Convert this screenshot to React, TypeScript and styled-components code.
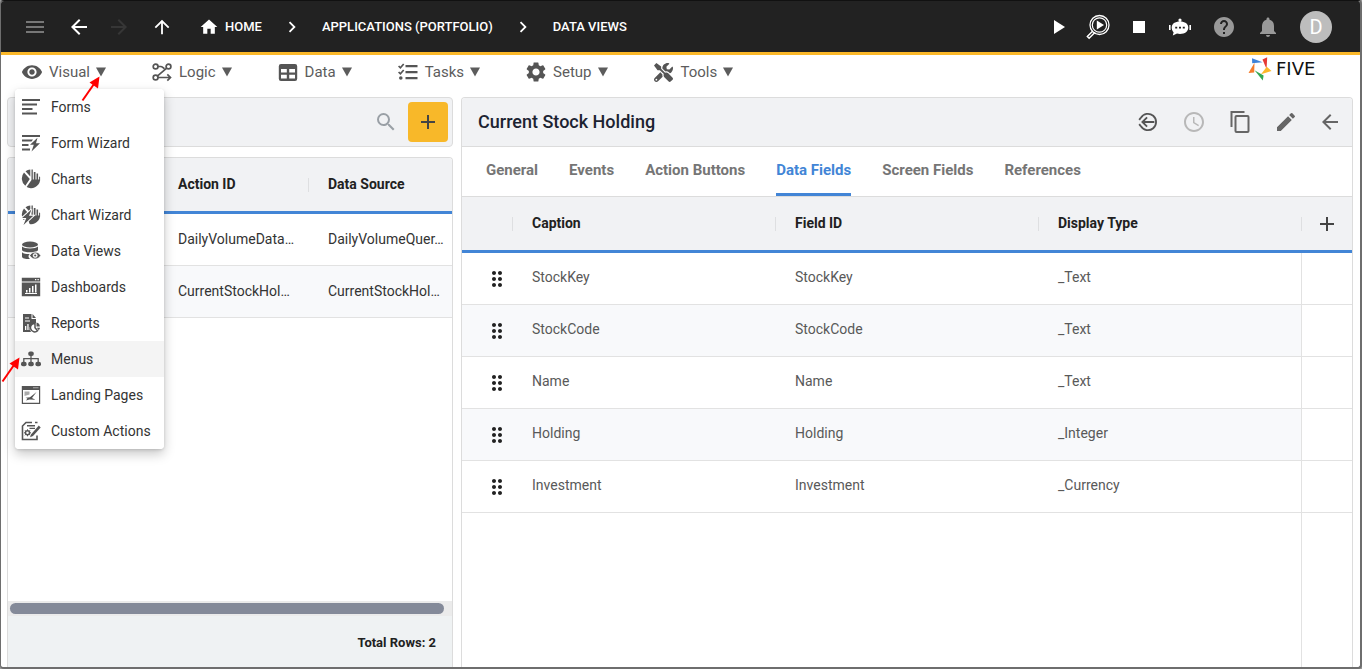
import React from "react";
import styled, { createGlobalStyle } from "styled-components";
import {
  MdAccessTime,
  MdAdd,
  MdArrowBack,
  MdArrowForward,
  MdArrowUpward,
  MdChevronRight,
  MdDragIndicator,
  MdEdit,
  MdHelp,
  MdHome,
  MdMenu,
  MdNotifications,
  MdPlayArrow,
  MdSearch,
  MdSettings,
  MdVisibility,
} from "react-icons/md";
import { FaTools } from "react-icons/fa";

const GlobalStyle = createGlobalStyle`
  *, *::before, *::after { box-sizing: border-box; }
  body {
    margin: 0;
    background: #9a9a9a;
    color: #212121;
    font-family: Roboto, "Liberation Sans", sans-serif;
    font-size: 14px;
    line-height: 20px;
  }
  button { font: inherit; color: inherit; background: none; border: 0; padding: 0; margin: 0; cursor: pointer; }
  a { color: inherit; text-decoration: none; }
  svg { display: block; flex: none; }
`;

const Frame = styled.div`
  position: relative;
  display: flex;
  flex-direction: column;
  height: 100vh;
  min-height: 480px;
  overflow: hidden;
  background: #fff;
  border: 1px solid #6e6e6e;
  border-right-width: 2px;
  border-bottom-width: 2px;
  border-top-color: #111;
  border-radius: 4px;
`;

/* Header */

const Header = styled.header`
  display: flex;
  justify-content: space-between;
  align-items: center;
  height: 54px;
  padding: 0 28px 0 22px;
  background: #222;
  border-bottom: 3px solid #fbb829;
  color: #fff;
`;

const HeaderNav = styled.nav`
  display: flex;
  align-items: center;
`;

const HeaderTools = styled.div`
  display: flex;
  align-items: center;
  gap: 20px;
`;

const HeaderButton = styled.button<{ $color?: string; $gap?: number; $width?: number }>`
  display: flex;
  align-items: center;
  justify-content: center;
  width: ${(p) => p.$width ?? 24}px;
  height: 24px;
  margin-right: ${(p) => p.$gap ?? 0}px;
  color: ${(p) => p.$color ?? "#fff"};
`;

const Crumb = styled.a`
  display: flex;
  align-items: center;
  gap: 6px;
  font-size: 13px;
  font-weight: 500;
`;

const CrumbSeparator = styled.span`
  display: flex;
  justify-content: center;
  width: 60px;
`;

const Avatar = styled.button`
  width: 32px;
  height: 32px;
  border-radius: 50%;
  background: #bdbdbd;
  color: #fff;
  font-size: 20px;
  line-height: 32px;
`;

/* Menu bar */

const MenuBar = styled.nav`
  display: flex;
  justify-content: space-between;
  align-items: flex-start;
  height: 42px;
  padding: 2px 24px 0 21px;
  flex: none;
`;

const MenuGroup = styled.div`
  display: flex;
  gap: 46px;
  padding-top: 4px;
`;

const MenuAnchor = styled.div`
  position: relative;
`;

const MenuButton = styled.button`
  display: flex;
  align-items: center;
  color: #5c5c5c;
  font-size: 15px;
  line-height: 20px;
`;

const MenuIcon = styled.span`
  display: flex;
  align-items: center;
  justify-content: center;
  width: 20px;
  height: 22px;
  margin-right: 7px;
  color: #555;
`;

const MenuLabel = styled.span`
  margin-right: 6px;
`;

const Dropdown = styled.div`
  position: absolute;
  z-index: 5;
  top: 28px;
  left: -7px;
  width: 149px;
  background: #fff;
  border-radius: 4px;
  box-shadow: 0 5px 12px rgba(0, 0, 0, 0.22), 0 1px 3px rgba(0, 0, 0, 0.14);
  overflow: hidden;
`;

const DropdownItem = styled.button<{ $active?: boolean }>`
  display: flex;
  align-items: center;
  gap: 10px;
  width: 100%;
  height: 36px;
  padding: 0 6px;
  background: ${(p) => (p.$active ? "#f4f4f4" : "#fff")};
  color: #333;
  white-space: nowrap;
  svg { color: #555; }
`;

const Brand = styled.a`
  display: flex;
  align-items: center;
  gap: 4px;
  color: #111;
  font-family: "DejaVu Sans", sans-serif;
  font-size: 18px;
  line-height: 24px;
`;

const BrandName = styled.span`
  width: 60px;
`;

/* Panels */

const Workspace = styled.main`
  display: grid;
  grid-template-columns: minmax(320px, 1fr) minmax(0, 2fr);
  gap: 8px;
  flex: 1;
  min-height: 0;
  padding: 0 7px 0 6px;
`;

const ListColumn = styled.section`
  display: flex;
  flex-direction: column;
  gap: 10px;
  min-width: 0;
  min-height: 0;
`;

const SearchBar = styled.div`
  display: flex;
  align-items: center;
  justify-content: flex-end;
  gap: 10px;
  height: 50px;
  padding: 0 4px;
  background: #f1f2f4;
  border: 1px solid #dcdcdc;
  border-radius: 4px;
  flex: none;
`;

const SearchButton = styled.button`
  color: #9aa0a6;
`;

const AddButton = styled.button`
  display: flex;
  align-items: center;
  justify-content: center;
  width: 40px;
  height: 40px;
  border-radius: 4px;
  background: #f8b829;
  color: #444;
`;

const Panel = styled.section`
  display: flex;
  flex-direction: column;
  flex: 1;
  min-width: 0;
  min-height: 0;
  overflow: hidden;
  border: 1px solid #dcdcdc;
  border-bottom: 0;
  border-radius: 4px 4px 0 0;
`;

const Viewport = styled.div`
  flex: 1;
  min-height: 0;
  overflow: hidden;
`;

const Table = styled.table<{ $width?: string }>`
  width: ${(p) => p.$width ?? "100%"};
  table-layout: fixed;
  border-collapse: separate;
  border-spacing: 0;
`;

const HeadCell = styled.th<{ $width?: number; $divider?: boolean }>`
  width: ${(p) => (p.$width ? `${p.$width}px` : "auto")};
  height: 56px;
  padding: 0 0 2px 20px;
  background: ${(p) =>
    p.$divider
      ? "linear-gradient(#dedfe1, #dedfe1) left center / 1px 14px no-repeat #f1f2f4"
      : "#f1f2f4"};
  border-bottom: 3px solid #4285d6;
  text-align: left;
  font-weight: 700;
`;

const Cell = styled.td<{ $striped?: boolean; $muted?: boolean }>`
  height: 52px;
  padding: ${(p) => (p.$muted ? "0 0 4px 20px" : "0 0 2px 20px")};
  background: ${(p) => (p.$striped ? "#f8f9fb" : "#fff")};
  border-bottom: 1px solid #e2e2e2;
  color: ${(p) => (p.$muted ? "#595959" : "#333")};
  white-space: nowrap;
`;

const HandleCell = styled(Cell)`
  padding: 0 0 0 23px;
  color: #222;
`;

const EndCell = styled(Cell)`
  padding: 0;
  border-left: 1px solid #e2e2e2;
`;

const EndHeadCell = styled(HeadCell)`
  padding: 0 0 0 14px;
`;

const ScrollTrack = styled.div`
  height: 15px;
  padding: 2px 8px 2px 2px;
  background: #ebebeb;
`;

const ScrollThumb = styled.div`
  height: 11px;
  border-radius: 6px;
  background: #848a99;
`;

const TotalRows = styled.footer`
  height: 51px;
  padding: 0 16px;
  background: #eff2f3;
  text-align: right;
  font-size: 13px;
  font-weight: 700;
  line-height: 54px;
`;

const DetailHeader = styled.div`
  display: flex;
  align-items: center;
  justify-content: space-between;
  height: 49px;
  padding: 0 10px 0 16px;
  background: #f1f2f4;
  border-bottom: 1px solid #dcdcdc;
  flex: none;
`;

const Title = styled.h1`
  margin: 0;
  color: #1c2331;
  font-size: 18px;
  font-weight: 500;
`;

const DetailActions = styled.div`
  display: flex;
  align-items: center;
  gap: 20px;
`;

const ActionButton = styled.button<{ $color?: string; $width?: number }>`
  display: flex;
  width: ${(p) => p.$width ?? 24}px;
  height: 24px;
  align-items: center;
  justify-content: center;
  color: ${(p) => p.$color ?? "#666"};
`;

const Tabs = styled.div`
  display: flex;
  gap: 31px;
  height: 50px;
  padding: 0 24px;
  border-bottom: 1px solid #dcdcdc;
  flex: none;
`;

const Tab = styled.button<{ $active?: boolean }>`
  height: 49px;
  border-bottom: 3px solid ${(p) => (p.$active ? "#4285d6" : "transparent")};
  color: ${(p) => (p.$active ? "#4285d6" : "#757575")};
  font-size: 15px;
  font-weight: 700;
`;

const DetailGrid = styled.div`
  display: flex;
  flex-direction: column;
  flex: 1;
  min-height: 0;
`;

const Filler = styled.div`
  align-self: flex-end;
  flex: 1;
  width: 51px;
  border-left: 1px solid #e2e2e2;
`;

const Pointer = styled.svg<{ $top: number; $left: number }>`
  position: absolute;
  z-index: 10;
  top: ${(p) => p.$top}px;
  left: ${(p) => p.$left}px;
  pointer-events: none;
`;

/* Icons */

const Icon = ({ size = 20, children }: { size?: number; children: React.ReactNode }) => (
  <svg width={size} height={size} viewBox="0 0 20 20" fill="currentColor" aria-hidden="true">
    {children}
  </svg>
);

const CaretIcon = () => (
  <svg width="10" height="10" viewBox="0 0 10 10" fill="currentColor" aria-hidden="true">
    <path d="M0 .5h10L5 9.500z" />
  </svg>
);

const LogicIcon = () => (
  <Icon>
    <g fill="none" stroke="currentColor" strokeWidth="1.700">
      <circle cx="3.600" cy="4.500" r="2.400" />
      <circle cx="16.500" cy="4.500" r="2.400" />
      <circle cx="3.600" cy="15.500" r="2.400" />
      <path d="M6 4.500h2.500c2 0 2.500 1.500 4 2.200M14.700 6.200 5.600 13.900M6 15.500h12M15.300 12.300l3.200 3.200-3.200 3.200" />
    </g>
  </Icon>
);

const DataIcon = () => (
  <Icon>
    <path
      fillRule="evenodd"
      d="M3 2h14a2.200 2.200 0 0 1 2.200 2.200v12.600a2.200 2.200 0 0 1-2.200 2.200H3a2.200 2.200 0 0 1-2.200-2.200V4.200A2.200 2.200 0 0 1 3 2zM3 7v3.500h5.800V7zm8.200 0v3.500H17V7zM3 12.700v3.800h5.800v-3.800zm8.200 0v3.800H17v-3.800z"
    />
  </Icon>
);

const TasksIcon = () => (
  <Icon>
    <path d="M7.500 3h12v2.200h-12zM7.500 9h12v2.200h-12zM7.500 15h12v2.200h-12z" />
    <circle cx="2.800" cy="16" r="1.800" />
    <path d="M.6 4l1.800 1.800L5.700 2M.6 10l1.800 1.800L5.700 8" fill="none" stroke="currentColor" strokeWidth="1.700" />
  </Icon>
);

const FormsIcon = () => (
  <Icon>
    <path d="M1 2h18v2H1zM1 6.500h15v2H1zM1 11h10.500v2H1zM1 15.500h15v2H1z" />
  </Icon>
);

const FormWizardIcon = () => (
  <Icon>
    <path d="M1 2h18v2H1zM1 6.500h11l-1.500 2H1zM1 11h6.500v2H1zM1 15.500h8v2H1z" />
    <path d="M16.500 4.800 9 11.800h3.800L10.500 18.500l8.500-8.300h-4z" />
  </Icon>
);

const ChartShape = () => (
  <>
    <path d="M3 3.600 8.800 10l-4.500 6.800A9.300 9.300 0 0 1 3 3.600zM4.500 2.200A9 9 0 0 1 9.300.6v7z" />
    <path d="M10.500.6h1.300v10h1V3h1.700v7.600h1V4.600h1.600v6h1V7.400l1 .6v3.600A9.200 9.200 0 0 1 5.600 18l4.900-7z" />
  </>
);

const ChartsIcon = () => (
  <Icon>
    <ChartShape />
  </Icon>
);

const ChartWizardIcon = () => (
  <Icon>
    <ChartShape />
    <path d="M0 13h4l-3 7h8l-1.500-4z" fill="#fff" />
    <path
      d="M10.500 4.500 1 13h4.300L2.500 20l9.800-9.300H8z"
      stroke="#fff"
      strokeWidth="2"
      paintOrder="stroke"
    />
  </Icon>
);

const DataViewsIcon = () => (
  <Icon>
    <ellipse cx="9" cy="3.500" rx="8" ry="3" />
    <path d="M1 5.500c2 2.500 14 2.500 16 0v3.700c-2 2.800-14 2.800-16 0zM1 11.200c1.700 1.700 5 2 8 1.900-2 1.200-2 3.300 0 4.900-3 .2-8-.3-8-2.500z" />
    <path
      fillRule="evenodd"
      d="M8.700 14.500c2.300-4.500 8.700-4.500 11 0-2.300 4.500-8.700 4.500-11 0zm5.500-2.100a2.100 2.100 0 1 0 0 4.200 2.100 2.100 0 0 0 0-4.200z"
      stroke="#fff"
      strokeWidth=".6"
    />
    <circle cx="14.200" cy="14.500" r="1.100" />
  </Icon>
);

const DashboardsIcon = () => (
  <Icon>
    <path d="M.8.800h18.400v3.700H.8zM.8 5.500h18.400v13.700H.8z" />
    <path d="M14 2h1.300v1.200H14zM16.500 2h1.300v1.200h-1.300zM4 16h12v1H4zM5 13h1.500v2.500H5zM8 11h1.500v4.500H8zM11 9h1.500v6.500H11zM14 7.500h1.500v8H14z" fill="#fff" />
  </Icon>
);

const ReportsIcon = () => (
  <Icon>
    <path d="M2 1h8.500v5H15v4a6 6 0 0 0-5 9H2zM11.500 1 15 5h-3.500z" />
    <path d="M4 4.500h4v1H4zM4 7.500h5v1H4zM4 13h1.300v4H4zM6.300 11h1.300v6H6.300zM8.600 14h1v3h-1z" fill="#fff" />
    <path d="M14 10.500v4.200l2.600 3a4.200 4.200 0 1 1-2.600-7.200z" fill="#fff" stroke="currentColor" strokeWidth="1.500" />
    <path d="M15.500 9.500c2 .3 3.300 2 3.400 4h-3.400zM15.800 14.800H19c-.1 1-.5 1.800-1.200 2.400z" />
  </Icon>
);

const MenusIcon = () => (
  <Icon>
    <rect x="7.200" y="2.500" width="5.600" height="4.500" rx="2" />
    <rect x="0" y="12.700" width="5.600" height="4.500" rx="2" />
    <rect x="7.200" y="12.700" width="5.600" height="4.500" rx="2" />
    <rect x="14.400" y="12.700" width="5.600" height="4.500" rx="2" />
    <path d="M10 6v7M2.800 13V9.700h14.400V13" fill="none" stroke="currentColor" strokeWidth="1.300" />
  </Icon>
);

const LandingPagesIcon = () => (
  <Icon>
    <path fillRule="evenodd" d="M.8 1h18.400v18H.8zM2 5v12.800h16V5z" />
    <path d="M12 2.300h5.500v1H12z" fill="#aaa" />
    <path d="M3.500 6.500h5v3l-5 1.500z" fill="#aaa" />
    <path d="M15.500 7 9 12.300l-4.500.5 2 .7-1.500 2 3.500-1 6 .2-3.500-1.700z" />
  </Icon>
);

const CustomActionsIcon = () => (
  <Icon>
    <path d="M11 1.500H5L1.500 5v13.500H16v-4M14 1.500h2.500" fill="none" stroke="currentColor" strokeWidth="1.600" />
    <path d="M6 4h8v1.500H6zM8.500 6.800H14V8H8.500z" />
    <circle cx="6.500" cy="11.800" r="2" fill="none" stroke="currentColor" strokeWidth="1.500" />
    <path d="M6.500 8.300v7M3 11.800h7M4 9.300l5 5M9 9.300l-5 5" stroke="currentColor" strokeWidth="1" />
    <circle cx="6.500" cy="11.800" r="1.200" fill="#fff" />
    <path d="m17.800 4.500 1.900 1.900-7.700 8.600-3 1.300 1.200-3.100z" />
  </Icon>
);

const InspectIcon = () => (
  <svg width="24" height="26" viewBox="0 0 24 26" fill="none" stroke="currentColor" aria-hidden="true">
    <circle cx="13.500" cy="11" r="9.500" strokeWidth="1.300" />
    <circle cx="13.500" cy="11" r="7.200" strokeWidth="1.200" />
    <path d="M6.800 17 1.300 22.500l1.800 1.800 6-6" strokeWidth="1.400" />
    <path d="M10.800 6.500v9l7.200-4.500z" fill="currentColor" stroke="none" />
  </svg>
);

const StopIcon = () => (
  <svg width="12" height="12" viewBox="0 0 12 12" fill="currentColor" aria-hidden="true">
    <path d="M0 0h12v12H0z" />
  </svg>
);

const BotIcon = () => (
  <svg width="22" height="18" viewBox="0 0 22 18" fill="currentColor" aria-hidden="true">
    <circle cx="11" cy="2" r="1.600" />
    <path d="M10.300 2h1.400v3h-1.400z" />
    <path d="M11 3.500c5 0 8.300 2.300 8.300 6s-3.300 6.500-8.300 6.500c-1 0-2-.1-3-.4L3.800 17.500l.8-3.200C3.300 13 2.700 11.300 2.700 9.500c0-3.700 3.300-6 8.300-6z" />
    <path d="M0 7h1.600v5H0zM20.400 7H22v5h-1.600z" />
    <path d="M6.200 8.800h2v1.800h-2zM10 8.800h2v1.800h-2zM13.800 8.800h2v1.800h-2z" fill="#222" />
  </svg>
);

const ReturnIcon = () => (
  <svg width="20" height="20" viewBox="0 0 22 22" fill="none" stroke="currentColor" strokeWidth="2" aria-hidden="true">
    <path d="M3.200 6.300a9 9 0 1 1 0 9.400" />
    <path d="M18 11H5M10 5.800 4.800 11l5.200 5.200M1.300 8.700 3.300 6M1.300 13.300l2 2.700" />
  </svg>
);

const CopyIcon = () => (
  <svg width="20" height="24" viewBox="0 0 20 24" fill="none" stroke="currentColor" strokeWidth="2" aria-hidden="true">
    <path d="M1.500 17V2h13" />
    <rect x="5.500" y="6" width="13" height="16" rx="1" />
  </svg>
);

const PinwheelIcon = () => (
  <svg width="24" height="24" viewBox="0 0 24 24" aria-hidden="true">
    <path d="M4 1.300 14.500 5.200 4.200 6.200z" fill="#3f83d8" />
    <path d="M19.200.3 18.500 12 14.500 2.500z" fill="#e53935" />
    <path d="M23.500 14 13 17.200 18.800 9.800z" fill="#fbb829" />
    <path d="M14.800 23.500 6.500 13.200 15.600 18.500z" fill="#34a853" />
    <path d="M.5 16 6.500 5.800 6.200 15.600z" fill="#f57c2a" />
  </svg>
);

/* Data */

const visualItems = [
  { label: "Forms", icon: <FormsIcon /> },
  { label: "Form Wizard", icon: <FormWizardIcon /> },
  { label: "Charts", icon: <ChartsIcon /> },
  { label: "Chart Wizard", icon: <ChartWizardIcon /> },
  { label: "Data Views", icon: <DataViewsIcon /> },
  { label: "Dashboards", icon: <DashboardsIcon /> },
  { label: "Reports", icon: <ReportsIcon /> },
  { label: "Menus", icon: <MenusIcon />, active: true },
  { label: "Landing Pages", icon: <LandingPagesIcon /> },
  { label: "Custom Actions", icon: <CustomActionsIcon /> },
];

const menus = [
  { label: "Visual", icon: <MdVisibility size={22} />, items: visualItems },
  { label: "Logic", icon: <LogicIcon /> },
  { label: "Data", icon: <DataIcon /> },
  { label: "Tasks", icon: <TasksIcon /> },
  { label: "Setup", icon: <MdSettings size={24} /> },
  { label: "Tools", icon: <FaTools size={19} /> },
];

const views = [
  ["DailyVolumeData…", "DailyVolumeQuer…"],
  ["CurrentStockHol…", "CurrentStockHol…"],
];

const tabs = ["General", "Events", "Action Buttons", "Data Fields", "Screen Fields", "References"];

const fields = [
  ["StockKey", "StockKey", "_Text"],
  ["StockCode", "StockCode", "_Text"],
  ["Name", "Name", "_Text"],
  ["Holding", "Holding", "_Integer"],
  ["Investment", "Investment", "_Currency"],
];

const RedArrow = ({ top, left }: { top: number; left: number }) => (
  <Pointer $top={top} $left={left} width="20" height="28" viewBox="0 0 20 28" aria-hidden="true">
    <path d="M1.500 26.500 13 10" stroke="#f00" strokeWidth="2" />
    <path d="M18.500 2.500 17 14.500 8.500 8.500z" fill="#f00" />
  </Pointer>
);

export default function App() {
  return (
    <>
      <GlobalStyle />
      <Frame>
        <Header>
          <HeaderNav>
            <HeaderButton $color="#777" $gap={20}><MdMenu size={24} /></HeaderButton>
            <HeaderButton $gap={16}><MdArrowBack size={24} /></HeaderButton>
            <HeaderButton $color="#363636" $gap={19}><MdArrowForward size={24} /></HeaderButton>
            <HeaderButton $gap={25}><MdArrowUpward size={22} /></HeaderButton>
            <Crumb href="#"><MdHome size={20} />HOME</Crumb>
            <CrumbSeparator><MdChevronRight size={22} /></CrumbSeparator>
            <Crumb href="#">APPLICATIONS (PORTFOLIO)</Crumb>
            <CrumbSeparator><MdChevronRight size={22} /></CrumbSeparator>
            <Crumb href="#">DATA VIEWS</Crumb>
          </HeaderNav>
          <HeaderTools>
            <HeaderButton $width={16}><MdPlayArrow size={24} /></HeaderButton>
            <HeaderButton><InspectIcon /></HeaderButton>
            <HeaderButton $width={18}><StopIcon /></HeaderButton>
            <HeaderButton><BotIcon /></HeaderButton>
            <HeaderButton $color="#999"><MdHelp size={24} /></HeaderButton>
            <HeaderButton $color="#999"><MdNotifications size={24} /></HeaderButton>
            <Avatar>D</Avatar>
          </HeaderTools>
        </Header>

        <MenuBar>
          <MenuGroup>
            {menus.map((menu) => (
              <MenuAnchor key={menu.label}>
                <MenuButton>
                  <MenuIcon>{menu.icon}</MenuIcon>
                  <MenuLabel>{menu.label}</MenuLabel>
                  <CaretIcon />
                </MenuButton>
                {menu.items && (
                  <Dropdown>
                    {menu.items.map((item) => (
                      <DropdownItem key={item.label} $active={item.active}>
                        {item.icon}
                        {item.label}
                      </DropdownItem>
                    ))}
                  </Dropdown>
                )}
              </MenuAnchor>
            ))}
          </MenuGroup>
          <Brand href="#"><PinwheelIcon /><BrandName>FIVE</BrandName></Brand>
        </MenuBar>

        <Workspace>
          <ListColumn>
            <SearchBar>
              <SearchButton aria-label="Search"><MdSearch size={24} /></SearchButton>
              <AddButton aria-label="Add"><MdAdd size={24} /></AddButton>
            </SearchBar>
            <Panel>
              <Viewport>
                <Table $width="450px">
                  <thead>
                    <tr>
                      <HeadCell $width={150} />
                      <HeadCell $width={150}>Action ID</HeadCell>
                      <HeadCell $width={150} $divider>Data Source</HeadCell>
                    </tr>
                  </thead>
                  <tbody>
                    {views.map((row, i) => (
                      <tr key={row[0]}>
                        <Cell $striped={i % 2 === 1} />
                        {row.map((text, j) => (
                          <Cell key={j} $striped={i % 2 === 1}>{text}</Cell>
                        ))}
                      </tr>
                    ))}
                  </tbody>
                </Table>
              </Viewport>
              <ScrollTrack><ScrollThumb /></ScrollTrack>
              <TotalRows>Total Rows: 2</TotalRows>
            </Panel>
          </ListColumn>

          <Panel>
            <DetailHeader>
              <Title>Current Stock Holding</Title>
              <DetailActions>
                <ActionButton $color="#555" $width={28}><ReturnIcon /></ActionButton>
                <ActionButton $color="#b8b8b8"><MdAccessTime size={24} /></ActionButton>
                <ActionButton $width={28}><CopyIcon /></ActionButton>
                <ActionButton><MdEdit size={24} /></ActionButton>
                <ActionButton><MdArrowBack size={24} /></ActionButton>
              </DetailActions>
            </DetailHeader>
            <Tabs>
              {tabs.map((tab) => (
                <Tab key={tab} $active={tab === "Data Fields"}>{tab}</Tab>
              ))}
            </Tabs>
            <DetailGrid>
              <Table>
                <thead>
                  <tr>
                    <HeadCell $width={50} />
                    <HeadCell $divider>Caption</HeadCell>
                    <HeadCell $divider>Field ID</HeadCell>
                    <HeadCell $divider>Display Type</HeadCell>
                    <EndHeadCell $width={51} $divider>
                      <ActionButton aria-label="Add field" $color="#444"><MdAdd size={24} /></ActionButton>
                    </EndHeadCell>
                  </tr>
                </thead>
                <tbody>
                  {fields.map((row, i) => (
                    <tr key={row[0]}>
                      <HandleCell $striped={i % 2 === 1}><MdDragIndicator size={24} /></HandleCell>
                      {row.map((text, j) => (
                        <Cell key={j} $striped={i % 2 === 1} $muted>{text}</Cell>
                      ))}
                      <EndCell />
                    </tr>
                  ))}
                </tbody>
              </Table>
              <Filler />
            </DetailGrid>
          </Panel>
        </Workspace>

        <RedArrow top={73} left={80} />
        <RedArrow top={354} left={0} />
      </Frame>
    </>
  );
}
